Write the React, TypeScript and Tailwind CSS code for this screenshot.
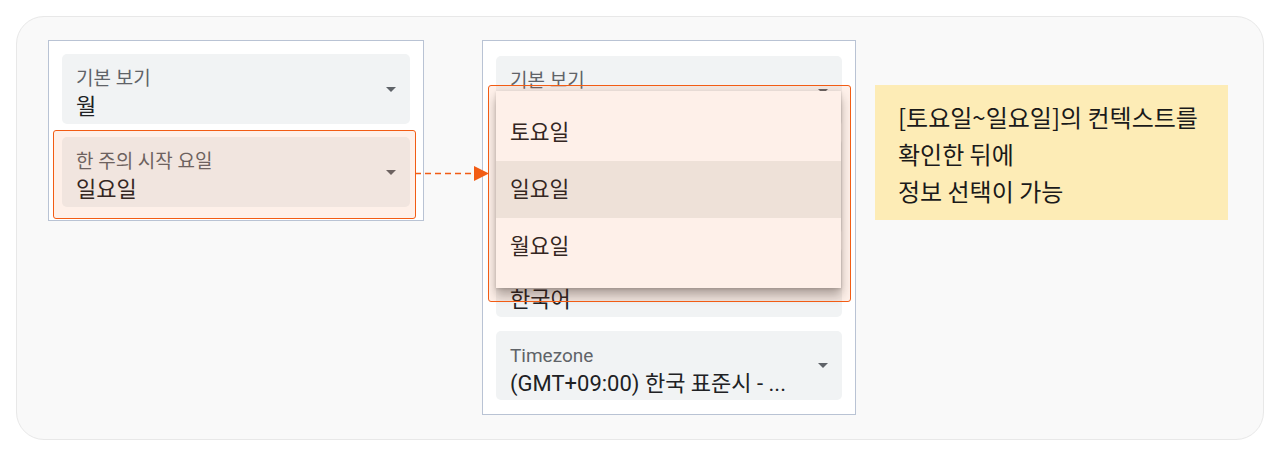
import React from "react";

const FONT = { fontFamily: "Roboto, 'Noto Sans CJK KR', sans-serif" };

function Caret() {
  return (
    <svg width="10" height="5" viewBox="0 0 10 5" className="shrink-0">
      <path d="M0 0 L10 0 L5 5 Z" fill="#5f6368" />
    </svg>
  );
}

function Select({ label, value, h = "h-[70px]" }: { label: string; value: string; h?: string }) {
  return (
    <div className={`${h} rounded-[5px] bg-[#f1f3f4] flex items-center pl-[14px] pr-[14px]`}>
      <div className="flex-1 self-start pt-[13px] flex flex-col min-w-0">
        <div className="text-[19px] leading-[24px] text-[#5f6368] whitespace-nowrap">{label}</div>
        <div className="text-[22px] leading-[32px] text-[#202124] whitespace-nowrap">{value}</div>
      </div>
      <Caret />
    </div>
  );
}

export default function App() {
  return (
    <div className="w-[1280px] h-[457px] bg-white pt-[16px] pl-[16px]" style={FONT}>
      <div className="relative w-[1248px] h-[424px] rounded-[28px] border border-[#e8e8e8] bg-[#f9f9f9] pl-[31px] pt-[23px] flex items-start">
        {/* Left panel */}
        <div className="relative z-10 w-[376px] h-[181px] border border-[#b9c3d4] bg-white px-[13px] pt-[13px] flex flex-col gap-[13px]">
          <Select label="기본 보기" value="월" />
          <Select label="한 주의 시작 요일" value="일요일" />
          {/* highlight */}
          <div className="absolute left-[4px] top-[89px] w-[363px] h-[89px] rounded-[3px] border-[1.5px] border-[#f25c14] bg-[rgba(242,92,20,0.095)] pointer-events-none" />
          {/* dashed connector */}
          <svg className="absolute left-[366px] top-[125px] overflow-visible" width="74" height="15" viewBox="0 0 74 15">
            <line x1="0" y1="7.5" x2="60" y2="7.5" stroke="#f25c14" strokeWidth="1.5" strokeDasharray="6 4" />
            <path d="M59 0 L74 7.5 L59 15 Z" fill="#f25c14" />
          </svg>
        </div>

        {/* Right panel */}
        <div className="relative ml-[58px] w-[374px] h-[375px] border border-[#b9c3d4] bg-white px-[13px] pt-[15px] flex flex-col">
          <Select label="기본 보기" value="월" />
          <div className="mt-[13px] h-[95px] rounded-[5px] bg-[#f1f3f4]" />
          <div className="mt-[13px]">
            <Select label="언어" value="한국어" />
          </div>
          <div className="mt-[14px]">
            <Select label="Timezone" value="(GMT+09:00) 한국 표준시 - ..." h="h-[69px]" />
          </div>

          {/* dropdown menu */}
          <div className="absolute left-[13px] top-[50px] w-[345px] h-[197px] bg-white py-[13px] shadow-[0_7px_10px_rgba(0,0,0,0.3),0_1px_3px_rgba(0,0,0,0.15)] flex flex-col">
            <div className="h-[57px] flex items-center pl-[14px] pt-[2px] text-[21.5px] text-[#202124]">토요일</div>
            <div className="h-[57px] flex items-center pl-[14px] pt-[2px] text-[21.5px] text-[#202124] bg-[#eeefed]">일요일</div>
            <div className="h-[57px] flex items-center pl-[14px] pt-[2px] text-[21.5px] text-[#202124]">월요일</div>
          </div>
          {/* highlight */}
          <div className="absolute left-[5px] top-[44px] w-[363px] h-[217px] rounded-[3px] border-[1.5px] border-[#f25c14] bg-[rgba(242,92,20,0.095)] pointer-events-none" />
        </div>

        {/* Note */}
        <div className="ml-[19px] mt-[45px] w-[353px] h-[135px] bg-[#fdecb6] pl-[23px] pt-[13px] text-[24px] leading-[37px] text-[#1a1a1a] whitespace-nowrap" style={{ fontFamily: "'Noto Sans CJK KR', sans-serif" }}>
          <div>[토요일~일요일]의 컨텍스트를</div>
          <div>확인한 뒤에</div>
          <div>정보 선택이 가능</div>
        </div>
      </div>
    </div>
  );
}
